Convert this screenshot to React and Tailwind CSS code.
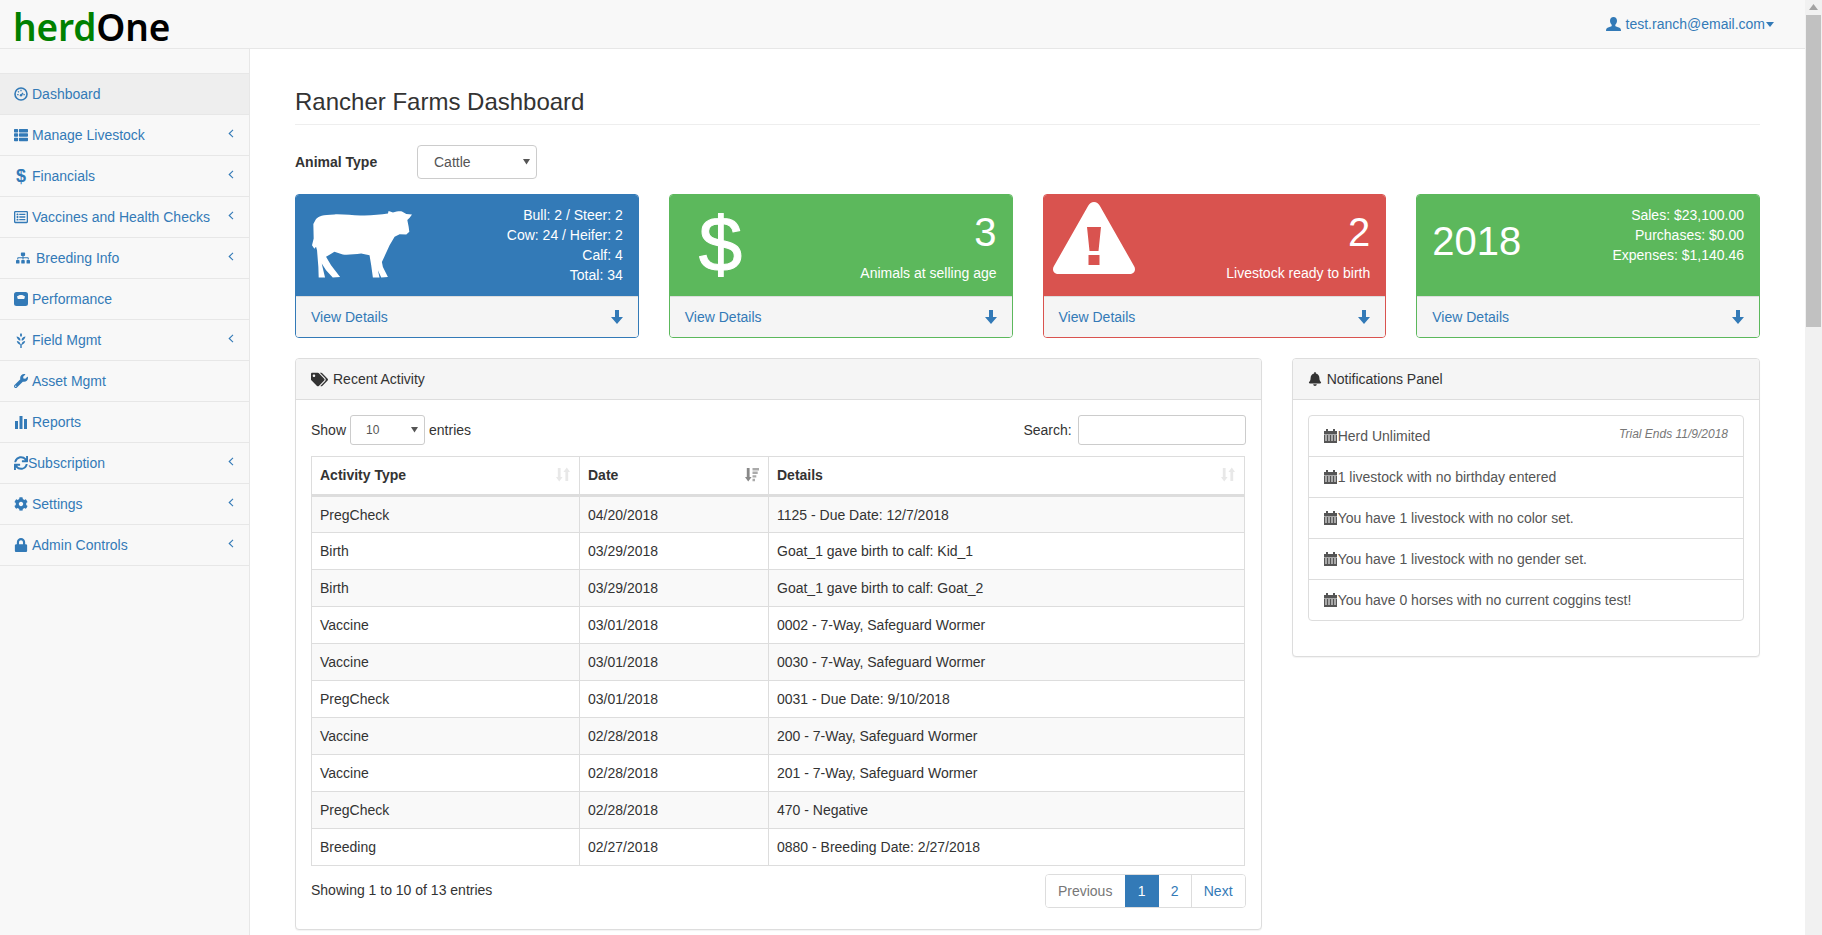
import React from "react";
import {
  FaThList, FaRegListAlt, FaSitemap, FaWrench, FaSync, FaCog, FaLock, FaTags, FaBell,
} from "react-icons/fa";

const Gauge = () => (
  <svg width="14" height="14" viewBox="0 0 14 14" fill="none" className="shrink-0">
    <circle cx="7" cy="7" r="6" stroke="currentColor" strokeWidth="1.6" />
    <path d="M3.200 7.600h1.400M9.400 7.600h1.400M7 2.800v1.500M4 4.400l.9.9M9 5.800 7.400 8" stroke="currentColor" strokeWidth="1.300" />
    <circle cx="7" cy="8.300" r="1.200" fill="currentColor" />
  </svg>
);
const Scale = () => (
  <svg width="14" height="14" viewBox="0 0 14 14" className="shrink-0">
    <path fillRule="evenodd" fill="currentColor" d="M2.500 0h9A2.500 2.500 0 0 1 14 2.500v9a2.500 2.500 0 0 1-2.500 2.500h-9A2.500 2.500 0 0 1 0 11.500v-9A2.500 2.500 0 0 1 2.500 0ZM3 4.600C4 3.600 5.400 3 7 3s3 .6 4 1.600L10.200 7H3.800L3 4.600Z" />
  </svg>
);
const Wheat = () => (
  <svg width="14" height="15" viewBox="0 0 14 15" className="shrink-0" fill="currentColor">
    <path d="M7 0c1 1 1.300 2 .7 3.200L7 4l-.7-.8C5.700 2 6 1 7 0Z" />
    <path d="M2.500 3.500c1.800.1 3.200 1 3.800 2.600v1.600C4.400 7.200 3 5.800 2.500 3.500Z" />
    <path d="M11.500 3.500c-1.800.1-3.200 1-3.800 2.600v1.600c1.900-.5 3.300-1.900 3.800-4.200Z" />
    <path d="M2.800 8c1.700.1 3 1 3.500 2.400v1.500C4.500 11.400 3.200 10.100 2.800 8Z" />
    <path d="M11.200 8c-1.700.1-3 1-3.500 2.400v1.500c1.800-.5 3.100-1.800 3.500-3.900Z" />
    <rect x="6.300" y="11" width="1.400" height="4" />
  </svg>
);
const Bars = () => (
  <svg width="14" height="14" viewBox="0 0 14 14" fill="currentColor" className="shrink-0">
    <rect x="1" y="6" width="3" height="8" />
    <rect x="5.500" y="1" width="3" height="13" />
    <rect x="10" y="4" width="3" height="10" />
  </svg>
);
const Calendar = () => (
  <svg width="13" height="14" viewBox="0 0 13 14" className="shrink-0" fill="currentColor">
    <path d="M0 2h2V0h2v2h5V0h2v2h2v3H0V2Z" />
    <path d="M0 5.600h13V14H0V5.600Zm1 1v1h2v-1H1Zm3 0v1h2v-1H4Zm3 0v1h2v-1H7Zm3 0v1h2v-1h-2Zm-9 2v1h2v-1H1Zm3 0v1h2v-1H4Zm3 0v1h2v-1H7Zm3 0v1h2v-1h-2Zm-9 2v1h2v-1H1Zm3 0v1h2v-1H4Zm3 0v1h2v-1H7Zm3 0v1h2v-1h-2Z" fillRule="evenodd" />
  </svg>
);
const ArrowDown = () => (
  <svg width="12" height="14" viewBox="0 0 12 14" fill="#337ab7" className="shrink-0">
    <path d="M4 0h4v7h4l-6 7-6-7h4V0Z" />
  </svg>
);
const SortBoth = () => (
  <svg width="14" height="15" viewBox="0 0 14 15" fill="#e8e8e8" className="shrink-0">
    <path d="M1.800 1h2.800v9h2L3.200 14.500 0 10h1.800V1Z" />
    <path d="M9.400 14h2.800V5H14L10.800.5 7.400 5h2v9Z" />
  </svg>
);
const SortDesc = () => (
  <svg width="14" height="15" viewBox="0 0 14 15" fill="#888" className="shrink-0">
    <path d="M1.800 1h2.800v9h2L3.200 14.500 0 10h1.800V1Z" />
    <path d="M7.500 1H14v2.400H7.500zM7.500 4.600h5.200V7H7.500zM7.500 8.200h3.800v2.400H7.500zM7.500 11.800H10v2.400H7.500z" fill="#aaa" />
  </svg>
);
const Cow = () => (
  <svg width="102" height="69" viewBox="90 420 305 206" fill="#fff" className="mt-[15px] shrink-0">
    <path d="M105 447C112 438 125 434 160 433C195 432 220 438 250 436C275 435 300 433 320 430L322 423L335 427C345 424 355 423 362 424L375 432L392 433L385 443L378 450L382 470L384 485L375 493L355 492L340 500L325 525L310 558L302 575L305 590L320 620L300 622L290 600L295 622L275 622L270 585L265 555L240 550C220 552 200 555 185 553L160 545L135 560L150 585L177 620L155 622L135 600L122 580L132 622L113 622L112 590L108 540L105 530L100 536L93 525L98 505L97 462Z" />
  </svg>
);
const Warn = () => (
  <svg width="84" height="74" viewBox="0 0 84 74" className="shrink-0">
    <path d="M42 1C44.500 1 46.500 2.500 47.800 4.800L82 65C84.500 69 82 73 77.500 73H6.500C2 73-.5 69 2 65L36.200 4.800C37.500 2.500 39.500 1 42 1Z" fill="#fff" />
    <path d="M35 26H49L46.500 50H37.500Z M36.500 54H47.500V64H36.500Z" fill="#d9534f" />
  </svg>
);
const UserIcon = () => (
  <svg width="15" height="14" viewBox="0 0 15 14" fill="#337ab7" className="mr-[5px] shrink-0">
    <path d="M7.500 0C9.600 0 11 1.500 11 3.800c0 1.700-.8 3.100-1.700 4v1.100c.6.500 2.500 1.100 3.700 1.700 1.100.5 2 1.300 2 3.400H0c0-2.100.9-2.900 2-3.400 1.200-.6 3.100-1.200 3.700-1.700V7.800C4.800 6.900 4 5.500 4 3.800 4 1.500 5.400 0 7.500 0Z" />
  </svg>
);
const Chevron = () => (
  <svg width="6" height="9" viewBox="0 0 6 9" fill="none" stroke="#337ab7" strokeWidth="1.100" className="absolute right-[15px] top-[14px]">
    <path d="M5 .8 1.200 4.500 5 8.200" />
  </svg>
);

const NavItem = ({ icon, label, chevron, active, gap = "gap-1" }) => (
  <a className={`relative flex h-[41px] items-center ${gap} border-b border-[#e7e7e7] pl-[14px] pr-[15px] text-[#337ab7] ${active ? "bg-[#eeeeee]" : ""}`}>
    {icon}
    <span>{label}</span>
    {chevron && <Chevron />}
  </a>
);

const cardColors = {
  blue: ["bg-[#337ab7]", "border-[#337ab7]"],
  green: ["bg-[#5cb85c]", "border-[#5cb85c]"],
  red: ["bg-[#d9534f]", "border-[#d9534f]"],
};
const StatCard = ({ color, children }) => (
  <div className={`overflow-hidden rounded-[4px] border ${cardColors[color][1]}`}>
    <div className={`flex h-[101px] justify-between pl-[15px] pr-[15px] text-white ${cardColors[color][0]}`}>{children}</div>
    <div className="flex h-[41px] items-center justify-between border-t border-[#ddd] bg-[#f5f5f5] pl-[15px] pr-[15px] text-[#337ab7]">
      <span>View Details</span>
      <ArrowDown />
    </div>
  </div>
);
const Panel = ({ icon, title, children }) => (
  <div className="rounded-[4px] border border-[#ddd] bg-white shadow-[0_1px_1px_rgba(0,0,0,0.05)]">
    <div className="flex h-[41px] items-center gap-[5px] rounded-t-[3px] border-b border-[#ddd] bg-[#f5f5f5] px-[15px] text-[#333]">
      {icon}
      <span>{title}</span>
    </div>
    <div className="p-[15px]">{children}</div>
  </div>
);

const rows = [
  ["PregCheck", "04/20/2018", "1125 - Due Date: 12/7/2018"],
  ["Birth", "03/29/2018", "Goat_1 gave birth to calf: Kid_1"],
  ["Birth", "03/29/2018", "Goat_1 gave birth to calf: Goat_2"],
  ["Vaccine", "03/01/2018", "0002 - 7-Way, Safeguard Wormer"],
  ["Vaccine", "03/01/2018", "0030 - 7-Way, Safeguard Wormer"],
  ["PregCheck", "03/01/2018", "0031 - Due Date: 9/10/2018"],
  ["Vaccine", "02/28/2018", "200 - 7-Way, Safeguard Wormer"],
  ["Vaccine", "02/28/2018", "201 - 7-Way, Safeguard Wormer"],
  ["PregCheck", "02/28/2018", "470 - Negative"],
  ["Breeding", "02/27/2018", "0880 - Breeding Date: 2/27/2018"],
];
const notices = [
  "1 livestock with no birthday entered",
  "You have 1 livestock with no color set.",
  "You have 1 livestock with no gender set.",
  "You have 0 horses with no current coggins test!",
];
const Caret = ({ className }) => (
  <svg width="7" height="7" viewBox="0 0 7 7" fill="#555" className={`pointer-events-none absolute ${className}`}>
    <path d="M0 1h7L3.500 6.500Z" />
  </svg>
);
const Th = ({ label, sort }) => (
  <th className="h-[39px] border border-b-[3px] border-[#ddd] px-2 pb-[2px] text-left font-bold text-[#333]">
    <div className="flex items-center justify-between pr-[1px]">
      <span>{label}</span>
      {sort}
    </div>
  </th>
);

export default function App() {
  return (
    <div className="flex h-[935px] overflow-hidden bg-white font-['Liberation_Sans',Arial,sans-serif] text-[14px] leading-5 text-[#333]">
      <div className="flex min-w-0 flex-1 flex-col">
        <header className="flex h-[49px] shrink-0 items-center justify-between border-b border-[#e7e7e7] bg-[#f8f8f8] pl-[13px] pr-[31px]">
          <div className="pt-[5px] font-['Noto_Sans','Open_Sans',sans-serif] text-[37px] font-semibold leading-[44px] tracking-[-0.1px]">
            <span className="text-[#008000]">herd</span>
            <span className="text-black">One</span>
          </div>
          <a className="flex items-center text-[#337ab7]">
            <UserIcon />
            <span>test.ranch@email.com</span>
            <svg width="8" height="5" viewBox="0 0 8 5" fill="#337ab7" className="ml-[1px]">
              <path d="M0 0h8L4 5Z" />
            </svg>
          </a>
        </header>
        <div className="flex min-h-0 flex-1">
          <nav className="w-[250px] shrink-0 border-r border-[#e7e7e7] bg-[#f8f8f8] pt-[24px]">
            <div className="border-t border-[#e7e7e7]">
              <NavItem active icon={<Gauge />} label="Dashboard" />
              <NavItem icon={<FaThList className="text-[14px]" />} label="Manage Livestock" chevron />
              <NavItem icon={<span className="w-[14px] text-center text-[18px] font-bold">$</span>} label="Financials" chevron />
              <NavItem icon={<FaRegListAlt className="text-[14px]" />} label="Vaccines and Health Checks" chevron />
              <NavItem icon={<FaSitemap className="ml-[2px] text-[14px]" />} label="Breeding Info" chevron gap="gap-[6px]" />
              <NavItem icon={<Scale />} label="Performance" />
              <NavItem icon={<Wheat />} label="Field Mgmt" chevron />
              <NavItem icon={<FaWrench className="text-[14px]" />} label="Asset Mgmt" />
              <NavItem icon={<Bars />} label="Reports" />
              <NavItem icon={<FaSync className="text-[14px]" />} label="Subscription" chevron gap="gap-0" />
              <NavItem icon={<FaCog className="text-[14px]" />} label="Settings" chevron />
              <NavItem icon={<FaLock className="text-[14px]" />} label="Admin Controls" chevron />
            </div>
          </nav>
          <main className="min-w-0 flex-1 px-[45px]">
            <h1 className="mt-[38px] border-b border-[#eee] pb-[8px] text-[24px] font-normal leading-[29px] text-[#333]">
              Rancher Farms Dashboard
            </h1>
            <div className="mt-[20px] flex h-[34px] items-center">
              <label className="w-[122px] font-bold">Animal Type</label>
              <div className="relative">
                <select className="h-[34px] w-[120px] appearance-none rounded-[4px] border border-[#ccc] bg-white pl-[16px] text-[14px] text-[#555]">
                  <option>Cattle</option>
                </select>
                <Caret className="right-[7px] top-[13px]" />
              </div>
            </div>
            <div className="mt-[15px] grid grid-cols-4 gap-[30px]">
              <StatCard color="blue">
                <Cow />
                <div className="pt-[10px] text-right">
                  <div>Bull: 2 / Steer: 2</div>
                  <div>Cow: 24 / Heifer: 2</div>
                  <div>Calf: 4</div>
                  <div>Total: 34</div>
                </div>
              </StatCard>
              <StatCard color="green">
                <span className="pl-[14px] pt-[6px] text-[78px] leading-[86px] [-webkit-text-stroke:1px_white]">$</span>
                <div className="pt-[15px] text-right">
                  <div className="text-[40px] leading-[44px]">3</div>
                  <div className="mt-[9px]">Animals at selling age</div>
                </div>
              </StatCard>
              <StatCard color="red">
                <div className="-ml-[7px] pt-[6px]"><Warn /></div>
                <div className="pt-[15px] text-right">
                  <div className="text-[40px] leading-[44px]">2</div>
                  <div className="mt-[9px]">Livestock ready to birth</div>
                </div>
              </StatCard>
              <StatCard color="green">
                <div className="pt-[24px] text-[40px] leading-[44px]">2018</div>
                <div className="pt-[10px] text-right">
                  <div>Sales: $23,100.00</div>
                  <div>Purchases: $0.00</div>
                  <div>Expenses: $1,140.46</div>
                </div>
              </StatCard>
            </div>
            <div className="mt-[20px] grid grid-cols-[966.67px_1fr] items-start gap-[30px]">
              <Panel icon={<FaTags className="text-[17px]" />} title="Recent Activity">
                <div className="flex h-[30px] items-center justify-between">
                  <div className="flex items-center gap-[4px]">
                    <span>Show</span>
                    <div className="relative">
                      <select className="h-[30px] w-[75px] appearance-none rounded-[3px] border border-[#ccc] bg-white pl-[15px] text-[12px] text-[#555]">
                        <option>10</option>
                      </select>
                      <Caret className="right-[7px] top-[11px]" />
                    </div>
                    <span>entries</span>
                  </div>
                  <div className="flex items-center gap-[6px]">
                    <span>Search:</span>
                    <input className="h-[30px] w-[168px] rounded-[3px] border border-[#ccc] bg-white" />
                  </div>
                </div>
                <table className="mt-[11px] w-[934px] table-fixed border-collapse">
                  <colgroup>
                    <col className="w-[268px]" />
                    <col className="w-[189px]" />
                    <col />
                  </colgroup>
                  <thead>
                    <tr>
                      <Th label="Activity Type" sort={<SortBoth />} />
                      <Th label="Date" sort={<SortDesc />} />
                      <Th label="Details" sort={<SortBoth />} />
                    </tr>
                  </thead>
                  <tbody>
                    {rows.map((r, i) => (
                      <tr key={i} className={i % 2 === 0 ? "bg-[#f9f9f9]" : "bg-white"}>
                        {r.map((c, j) => (
                          <td key={j} className="h-[37px] border border-[#ddd] px-2 py-0">{c}</td>
                        ))}
                      </tr>
                    ))}
                  </tbody>
                </table>
                <div className="mb-[6px] mt-[8px] flex h-[34px] items-start justify-between">
                  <div className="pt-[6px]">Showing 1 to 10 of 13 entries</div>
                  <div className="flex h-[34px] items-stretch overflow-hidden rounded-[4px] border border-[#ddd]">
                    <span className="flex w-[79px] items-center justify-center bg-white text-[#777]">Previous</span>
                    <span className="flex w-[34px] items-center justify-center bg-[#337ab7] text-white">1</span>
                    <span className="flex w-[33px] items-center justify-center border-r border-[#ddd] bg-white text-[#337ab7]">2</span>
                    <span className="flex w-[53px] items-center justify-center bg-white text-[#337ab7]">Next</span>
                  </div>
                </div>
              </Panel>
              <Panel icon={<FaBell className="text-[14px]" />} title="Notifications Panel">
                <div className="mb-[20px] rounded-[4px] border border-[#ddd]">
                  <div className="flex h-[41px] items-center justify-between border-b border-[#ddd] px-[15px] text-[#555]">
                    <div className="flex items-center gap-px"><Calendar /><span>Herd Unlimited</span></div>
                    <em className="-mt-[5px] text-[12px] text-[#777]">Trial Ends 11/9/2018</em>
                  </div>
                  {notices.map((n, i) => (
                    <div key={i} className={`flex items-center gap-px px-[15px] text-[#555] ${i < notices.length - 1 ? "h-[41px] border-b border-[#ddd]" : "h-[40px]"}`}>
                      <Calendar />
                      <span>{n}</span>
                    </div>
                  ))}
                </div>
              </Panel>
            </div>
          </main>
        </div>
      </div>
      <div className="flex w-[17px] shrink-0 flex-col items-center bg-[#f1f1f1]">
        <svg width="17" height="15" viewBox="0 0 17 15" fill="#a3a3a3" className="shrink-0">
          <path d="M8.500 4 13 10H4Z" />
        </svg>
        <div className="h-[312px] w-[15px] bg-[#c1c1c1]" />
      </div>
    </div>
  );
}
